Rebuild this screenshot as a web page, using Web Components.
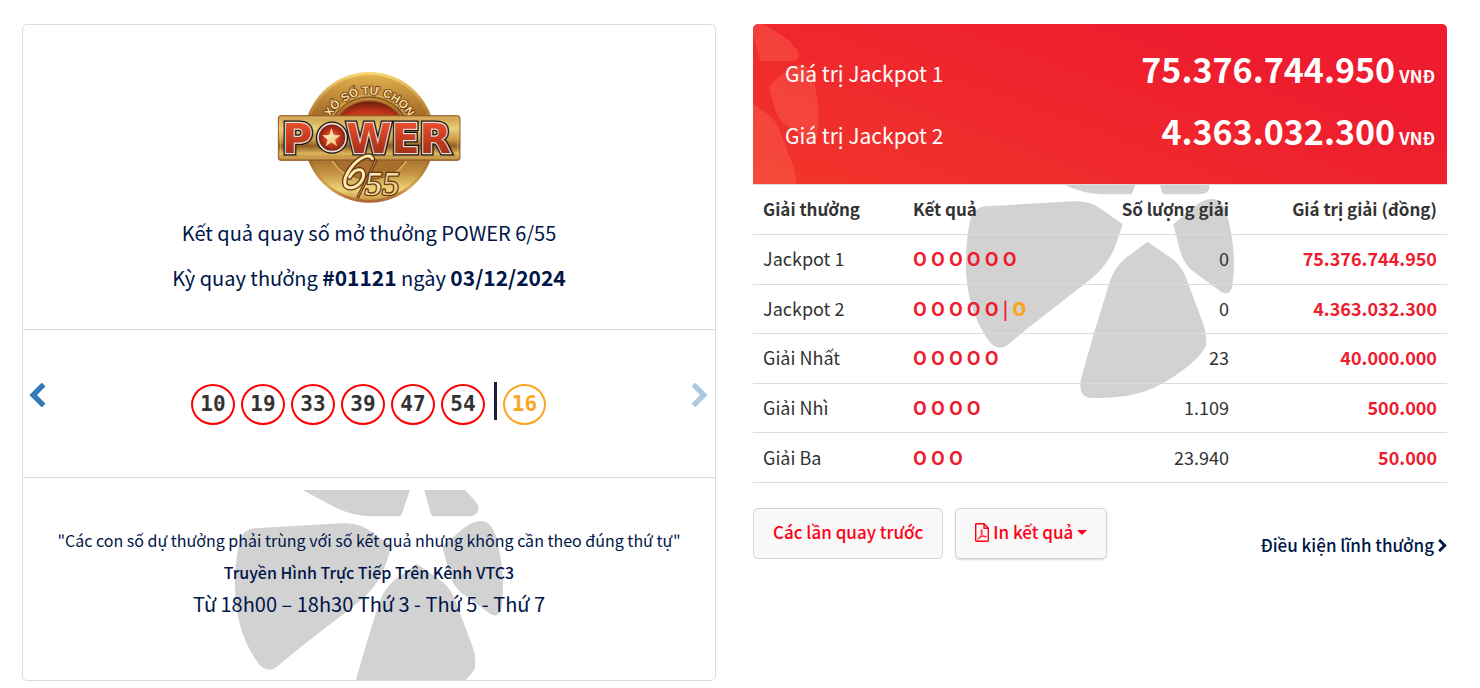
<!DOCTYPE html>
<html lang="vi">
<head>
<meta charset="utf-8">
<meta name="viewport" content="width=device-width, initial-scale=1">
<title>Kết quả quay số mở thưởng POWER 6/55</title>
<style>
    html {
        --navy: #001548;
        --red: #ee1c2e;
        --gold: #fba51f;
        --line: #dcdcdc;
    }
    body {
        margin: 0;
        background: #fff;
        color: #333;
        font-family: "Noto Sans CJK SC", "Noto Sans", sans-serif;
        font-size: 18px;
        line-height: 28px;
    }
    draw-card b {
        font-size: 21px;
    }
</style>
</head>
<body>

<result-page>
    <draw-card slot="draw">
        <power-logo slot="logo"></power-logo>
        <span slot="title">Kết quả quay số mở thưởng POWER 6/55</span>
        <span slot="draw">Kỳ quay thưởng <b>#01121</b> ngày <b>03/12/2024</b></span>
        <number-ball>10</number-ball>
        <number-ball>19</number-ball>
        <number-ball>33</number-ball>
        <number-ball>39</number-ball>
        <number-ball>47</number-ball>
        <number-ball>54</number-ball>
        <number-ball bonus>16</number-ball>
        <span slot="note">"Các con số dự thưởng phải trùng với số kết quả nhưng không cần theo đúng thứ tự"</span>
        <span slot="channel">Truyền Hình Trực Tiếp Trên Kênh VTC3</span>
        <span slot="time">Từ 18h00 – 18h30 Thứ 3 - Thứ 5 - Thứ 7</span>
    </draw-card>

    <jackpot-banner slot="prizes">
        <jackpot-value label="Giá trị Jackpot 1">75.376.744.950</jackpot-value>
        <jackpot-value label="Giá trị Jackpot 2">4.363.032.300</jackpot-value>
    </jackpot-banner>
    <prize-table slot="prizes"></prize-table>
    <action-bar slot="prizes">
        <action-button>Các lần quay trước</action-button>
        <action-button menu>In kết quả</action-button>
        <more-link slot="end" href="#dieu-kien">Điều kiện lĩnh thưởng</more-link>
    </action-bar>
</result-page>

<script>
function define(name, html, setup) {
    customElements.define(name, class extends HTMLElement {
        constructor() {
            super();
            this.attachShadow({ mode: "open" }).innerHTML = html;
        }
        connectedCallback() {
            if (setup) setup(this, this.shadowRoot);
        }
    });
}

define("result-page", `
    <style>
        :host {
            display: grid;
            grid-template-columns: repeat(2, minmax(0, 1fr));
            gap: 37px;
            align-items: start;
            padding: 24px 33px 0 22px;
        }
    </style>
    <slot name="draw"></slot>
    <div><slot name="prizes"></slot></div>
`);

// Grey pinwheel petals. The view attribute picks which part of the shape shows.
define("petal-mark", `
    <style>
        :host { display: block; color: #d2d2d2; }
        svg { display: block; width: 100%; height: 100%; }
    </style>
    <svg viewBox="75 -33 810 693" preserveAspectRatio="xMinYMin slice" fill="currentColor" aria-hidden="true">
        <path d="M281-33 355 7Q420 45 490 46H570Q576 46 578 40L603-33Z"/>
        <path d="M630-110C690-90 735-55 768-33Q792 -8 806 10C813 30 803 46 780 46H674Q668 46 666 40L625-110Z"/>
        <path d="M137 82 400 67Q450 65 480 88L548 136 530 190Q515 240 470 285C430 322 300 415 210 492Q180 520 152 492C72 390 66 250 90 125Q98 87 137 82Z"/>
        <path d="M700 136 760 85Q790 60 815 60Q848 60 862 110C885 200 885 260 877 320Q870 352 845 340L755 274Q730 250 720 215Z"/>
        <path d="M623 188 560 235Q530 258 512 300C495 355 460 465 422 605Q415 655 455 657C550 659 620 645 690 600C740 568 785 530 798 500Q802 468 790 435L745 315Q730 265 700 242Z"/>
    </svg>
`, (el, root) => {
    const view = el.getAttribute("view");
    if (view) root.querySelector("svg").setAttribute("viewBox", view);
});

define("draw-card", `
    <style>
        :host {
            display: block;
            border: 1px solid var(--line);
            border-radius: 5px;
            color: var(--navy);
            text-align: center;
        }
        h1, h2, p { margin: 0; font-weight: 400; }
        header { padding: 46px 12px 29px; }
        h1, h2 { font-size: 20px; line-height: 45px; }
        h1 { margin-top: 6px; }
        .draw {
            display: flex;
            align-items: center;
            justify-content: space-between;
            padding: 52px 7px 51px 6px;
            border: solid var(--line);
            border-width: 1px 0;
        }
        .draw a { color: #337ab7; padding-bottom: 18px; }
        .draw a.off { opacity: .4; }
        .draw svg { display: block; width: 17px; height: 24px; }
        .balls { display: flex; gap: 6px; }
        footer {
            position: relative;
            min-height: 156px;
            padding: 46px 12px 0;
            overflow: hidden;
        }
        petal-mark {
            position: absolute;
            left: 211px;
            top: 12px;
            width: 270px;
            height: 231px;
        }
        footer p { position: relative; line-height: 32px; font-size: 16px; }
        .channel { font-weight: 500; }
        .time { font-size: 20px; }
    </style>
    <header>
        <slot name="logo"></slot>
        <h1><slot name="title"></slot></h1>
        <h2><slot name="draw"></slot></h2>
    </header>
    <div class="draw">
        <a href="#prev" aria-label="Kỳ trước">
            <svg viewBox="154 26 1036 1612" fill="currentColor"><path d="M1171 301 640 832l531 531q19 19 19 45t-19 45l-166 166q-19 19-45 19t-45-19L173 877q-19-19-19-45t19-45L915 45q19-19 45-19t45 19l166 166q19 19 19 45t-19 45z"/></svg>
        </a>
        <div class="balls"><slot></slot></div>
        <a class="off" href="#next" aria-label="Kỳ sau">
            <svg viewBox="154 26 1036 1612" fill="currentColor"><path transform="matrix(-1 0 0 1 1344 0)" d="M1171 301 640 832l531 531q19 19 19 45t-19 45l-166 166q-19 19-45 19t-45-19L173 877q-19-19-19-45t19-45L915 45q19-19 45-19t45 19l166 166q19 19 19 45t-19 45z"/></svg>
        </a>
    </div>
    <footer>
        <petal-mark></petal-mark>
        <p><slot name="note"></slot></p>
        <p class="channel"><slot name="channel"></slot></p>
        <p class="time"><slot name="time"></slot></p>
    </footer>
`);

define("power-logo", `
    <style>
        :host { display: block; }
        svg { display: block; width: 184px; height: 133px; margin: 0 auto; }
    </style>
    <svg viewBox="20 16 552 399" role="img" aria-label="Xổ số tự chọn Power 6/55">
        <defs>
            <linearGradient id="rim" x1="0" y1="0" x2="0" y2="1">
                <stop offset="0" stop-color="#f7d877"/><stop offset=".3" stop-color="#b9812f"/>
                <stop offset=".7" stop-color="#a8702a"/><stop offset=".88" stop-color="#d9a850"/><stop offset="1" stop-color="#a8602f"/>
            </linearGradient>
            <linearGradient id="disc" x1="0" y1="0" x2="0" y2="1">
                <stop offset="0" stop-color="#dfb04c"/><stop offset=".3" stop-color="#a86f2a"/>
                <stop offset=".62" stop-color="#9a6428"/><stop offset=".78" stop-color="#c08f40"/><stop offset=".92" stop-color="#f0d57a"/><stop offset="1" stop-color="#c99a45"/>
            </linearGradient>
            <linearGradient id="bar" x1="0" y1="0" x2="0" y2="1">
                <stop offset="0" stop-color="#c99a48"/><stop offset=".3" stop-color="#ecd07c"/><stop offset=".55" stop-color="#c69543"/>
                <stop offset=".68" stop-color="#8d5c22"/><stop offset=".85" stop-color="#dcb659"/><stop offset="1" stop-color="#a87430"/>
            </linearGradient>
            <linearGradient id="red" gradientUnits="userSpaceOnUse" x1="0" y1="170" x2="0" y2="262">
                <stop offset="0" stop-color="#e8502c"/><stop offset=".55" stop-color="#c43c20"/><stop offset="1" stop-color="#a33118"/>
            </linearGradient>
            <radialGradient id="glow" cx=".5" cy=".7" r=".6">
                <stop offset="0" stop-color="#e0491f"/><stop offset=".6" stop-color="#b53018"/><stop offset="1" stop-color="#7b2010"/>
            </radialGradient>
            <radialGradient id="ball" cx=".5" cy=".5" r=".5">
                <stop offset="0" stop-color="#ff8a50"/><stop offset=".5" stop-color="#c6391c"/><stop offset="1" stop-color="#7b1f10"/>
            </radialGradient>
            <linearGradient id="cream" x1="0" y1="0" x2="1" y2="1">
                <stop offset="0" stop-color="#fffbe0"/><stop offset="1" stop-color="#f0bd66"/>
            </linearGradient>
            <path id="arc" d="M172 172A134 134 0 0 1 422 172"/>
        </defs>
        <circle cx="297" cy="215" r="196" fill="url(#rim)"/>
        <circle cx="297" cy="215" r="187" fill="url(#disc)"/>
        <circle cx="297" cy="218" r="130" fill="none" stroke="#d9ad57" stroke-width="5"/>
        <circle cx="297" cy="218" r="124" fill="none" stroke="#7c4a1c" stroke-width="3"/>
        <circle cx="297" cy="222" r="119" fill="#a8702c"/>
        <path d="M190 178A116 116 0 0 1 404 178Z" fill="url(#glow)" stroke="#7f3513" stroke-width="2"/>
        <text font-family="Liberation Sans, Arial, sans-serif" font-weight="700" font-size="35" fill="#f6dd9c" stroke="#6b3510" stroke-width="5" stroke-linejoin="round" paint-order="stroke" text-anchor="middle"><textPath href="#arc" startOffset="50%">XỔ SỐ TỰ CHỌN</textPath></text>
        <rect x="24" y="150" width="545" height="134" rx="7" fill="url(#bar)" stroke="#8e5d28" stroke-width="3"/>
        <rect x="31" y="157" width="531" height="120" rx="4" fill="none" stroke="#e3bf70" stroke-width="2"/>
        <g font-family="DejaVu Sans, sans-serif" font-weight="700" font-size="123" stroke-linejoin="miter">
            <g fill="#15110f" stroke="#15110f" stroke-width="15">
                <text x="36" y="262">P</text><text x="228" y="262">WER</text>
                <circle cx="185" cy="216" r="41"/>
            </g>
            <g fill="url(#red)" stroke="#e6ddd9" stroke-width="7" paint-order="stroke">
                <text x="36" y="262">P</text><text x="228" y="262">WER</text>
            </g>
            <circle cx="185" cy="216" r="42" fill="url(#ball)" stroke="#e6ddd9" stroke-width="5"/>
        </g>
        <path d="M183 187 190 208 211 209 194 222 200 242 183 230 166 242 172 222 156 209 177 208Z" fill="url(#cream)"/>
        <g font-family="Liberation Serif, serif" font-style="italic" stroke-linecap="round" stroke-linejoin="round">
            <path d="M306 279C296 260 262 279 241 308 214 345 220 368 243 366 268 363 283 337 279 322 275 305 251 310 238 334" fill="none" stroke="#643a15" stroke-width="17"/>
            <path d="M316 286 263 394" fill="none" stroke="#643a15" stroke-width="9"/>
            <path d="M306 279C296 260 262 279 241 308 214 345 220 368 243 366 268 363 283 337 279 322 275 305 251 310 238 334" fill="none" stroke="#ffe9ae" stroke-width="9"/>
            <path d="M316 286 263 394" fill="none" stroke="#c98f4c" stroke-width="3"/>
            <text x="284" y="387" font-size="103" fill="url(#cream)" stroke="#643a15" stroke-width="8" paint-order="stroke">55</text>
        </g>
    </svg>
`);

define("number-ball", `
    <style>
        :host { display: flex; align-items: center; }
        span {
            box-sizing: border-box;
            width: 44px;
            height: 41px;
            border: 2px solid #f00;
            border-radius: 50%;
            color: #333;
            font: 700 21px/37px "DejaVu Sans Mono", monospace;
        }
        i { display: none; }
        :host([bonus]) span { width: 43px; border-color: var(--gold); color: var(--gold); }
        :host([bonus]) i {
            display: block;
            width: 3px;
            height: 38px;
            margin: 0 6px 6px 3px;
            background: #1c1c3c;
        }
    </style>
    <i></i><span><slot></slot></span>
`);

define("jackpot-banner", `
    <style>
        :host {
            display: grid;
            gap: 13px;
            position: relative;
            overflow: hidden;
            padding: 20px 12px 29px 32px;
            border-radius: 5px 5px 0 0;
            background: linear-gradient(20deg, #f1362b, #ee1c2e 75%);
            color: #fff;
        }
        petal-mark {
            position: absolute;
            left: 0;
            top: 0;
            width: 66px;
            height: 160px;
            color: #ff7860;
            opacity: .3;
        }
        ::slotted(*) { position: relative; }
    </style>
    <petal-mark view="642 -89 241 585"></petal-mark>
    <slot></slot>
`);

define("jackpot-value", `
    <style>
        :host { display: flex; justify-content: space-between; align-items: center; line-height: 49px; }
        .label { font-size: 21px; padding-top: 9px; line-height: 40px; }
        .value { font-size: 34px; font-weight: 700; }
        small { font-size: 17px; line-height: 1; font-weight: 700; margin-left: 4px; }
    </style>
    <span class="label"></span>
    <span class="value"><slot></slot><small>VNĐ</small></span>
`, (el, root) => {
    root.querySelector(".label").textContent = el.getAttribute("label");
});

const prizes = [
    ["Jackpot 1", 6, "0", "75.376.744.950"],
    ["Jackpot 2", 5, "0", "4.363.032.300", true],
    ["Giải Nhất", 5, "23", "40.000.000"],
    ["Giải Nhì", 4, "1.109", "500.000"],
    ["Giải Ba", 3, "23.940", "50.000"]
];

define("prize-table", `
    <style>
        :host { display: block; position: relative; }
        petal-mark {
            position: absolute;
            left: 212px;
            top: 0;
            width: 270px;
            height: 215px;
        }
        table {
            position: relative;
            width: 100%;
            height: 299px;
            border-collapse: collapse;
            table-layout: fixed;
        }
        th, td {
            padding: 0 10px 2px;
            border-bottom: 1px solid var(--line);
            text-align: left;
            font-weight: 400;
        }
        thead th {
            height: 47px;
            border-top: 1px solid var(--line);
            font-size: 17px;
            font-weight: 700;
        }
        .name { width: 130px; }
        .marks { width: 140px; }
        .count { width: 156px; text-align: right; }
        .value { text-align: right; }
        td.marks, td.value { color: var(--red); font-weight: 700; }
        td.marks b { color: var(--gold); }
    </style>
    <petal-mark view="75 15 810 645"></petal-mark>
    <table>
        <thead>
            <tr>
                <th class="name">Giải thưởng</th>
                <th class="marks">Kết quả</th>
                <th class="count">Số lượng giải</th>
                <th class="value">Giá trị giải (đồng)</th>
            </tr>
        </thead>
        <tbody></tbody>
    </table>
`, (el, root) => {
    root.querySelector("tbody").innerHTML = prizes.map(([name, hits, count, value, bonus]) => `
        <tr>
            <td>${name}</td>
            <td class="marks">${Array(hits).fill("O").join(" ")}${bonus ? " | <b>O</b>" : ""}</td>
            <td class="count">${count}</td>
            <td class="value">${value}</td>
        </tr>`).join("");
});

define("action-bar", `
    <style>
        :host { display: flex; justify-content: space-between; align-items: center; margin-top: 24px; }
        div { display: flex; gap: 12px; }
        ::slotted(more-link) { margin-top: 24px; }
    </style>
    <div><slot></slot></div>
    <slot name="end"></slot>
`);

define("action-button", `
    <style>
        :host { display: block; }
        button {
            display: flex;
            align-items: center;
            gap: 4px;
            height: 51px;
            padding: 0 19px 2px;
            border: 1px solid #d5d5d5;
            border-radius: 5px;
            background: #f8f8f8;
            color: #ff0016;
            font: 500 17px/28px "Noto Sans CJK SC", "Noto Sans", sans-serif;
        }
        svg { display: none; }
        :host([menu]) button { box-shadow: 0 1px 2px rgba(0, 0, 0, .15); }
        :host([menu]) svg { display: block; }
    </style>
    <button type="button">
        <svg width="14" height="19" viewBox="0 0 14 19" fill="none" stroke="currentColor" aria-hidden="true">
            <path stroke-width="1.4" stroke-linejoin="round" d="M9 .7H1.4Q.7.7.7 1.4V17.6Q.7 18.3 1.4 18.3H12.6Q13.3 18.3 13.3 17.6V5.3L9 .7V5.3H13.3"/>
            <path stroke-width=".9" d="M6.3 6.8C7.6 6.8 7.2 9.2 6.7 10.8 5.9 13 4.2 16.2 3.1 16.2 1.8 15.9 5 13.4 10.6 13.1 12.2 13.4 11.4 14.5 10 14.1 7.6 13.2 5.5 9.7 6.3 6.8Z"/>
        </svg>
        <slot></slot>
        <svg width="10" height="5" viewBox="0 0 10 5" fill="currentColor" aria-hidden="true"><path d="M0 0H10L5 5Z"/></svg>
    </button>
`);

define("more-link", `
    <style>
        :host { display: block; }
        a {
            display: flex;
            align-items: center;
            gap: 4px;
            color: var(--navy);
            text-decoration: none;
            font-size: 17px;
            font-weight: 500;
        }
    </style>
    <a><slot></slot><svg width="9" height="13" viewBox="154 26 1036 1612" fill="currentColor" aria-hidden="true"><path transform="matrix(-1 0 0 1 1344 0)" d="M1171 301 640 832l531 531q19 19 19 45t-19 45l-166 166q-19 19-45 19t-45-19L173 877q-19-19-19-45t19-45L915 45q19-19 45-19t45 19l166 166q19 19 19 45t-19 45z"/></svg></a>
`, (el, root) => {
    root.querySelector("a").href = el.getAttribute("href");
});
</script>
</body>
</html>
